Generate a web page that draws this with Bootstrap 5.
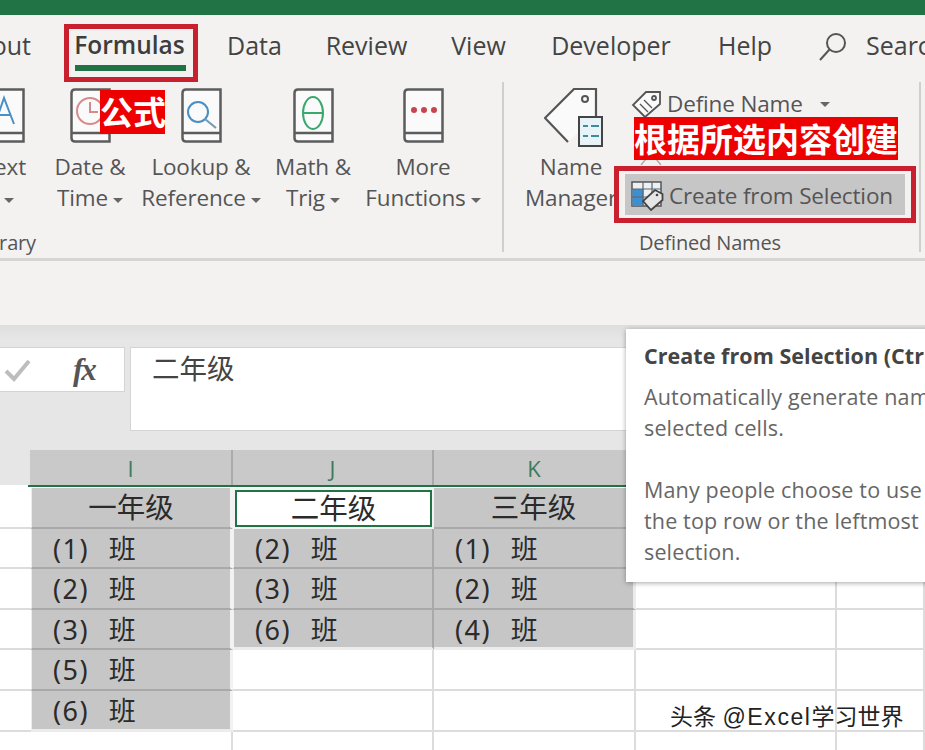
<!DOCTYPE html>
<html lang="zh">
<head>
<meta charset="utf-8">
<title>Excel</title>
<link href="https://cdn.jsdelivr.net/npm/bootstrap@5.3.0/dist/css/bootstrap.min.css" rel="stylesheet">
<style>
html,body{height:750px;overflow:hidden;background:#fff}
body{font-family:"Open Sans","Noto Sans CJK SC",sans-serif;color:#444;width:925px;position:relative}
.titlebar{height:15px;background:#217346}
.tabs{height:66px;background:#f3f2f1;font-size:25px;line-height:60px;white-space:nowrap;letter-spacing:0}
.tabs>div{flex:none;text-align:center}
.t0{width:53px;text-align:right!important;padding-right:22px;direction:rtl}
.t1{width:153px;font-weight:600;color:#3d3d3d;font-size:24.5px}.t2{width:97px}.t3{width:127px}.t4{width:97px}.t5{width:168px}.t6{width:100px}.t7{width:71px;padding-left:4px}.t8{width:70px;text-align:left!important}
.ribbon{height:177px;background:#f3f2f1;font-size:22.5px;color:#555;letter-spacing:-.15px;border:0}
.lib{width:502px;flex:none}
.items{height:147px;margin-left:-39px}
.item{flex:none;padding-top:7px;text-align:center;white-space:nowrap;line-height:31px}
.item svg{display:block;margin:0 auto 8px}
.w86{width:86px}.w136{width:136px}.w88{width:88px}.w132{width:132px}
.caret{display:inline-block;width:0;height:0;border:5px solid transparent;border-top:5px solid #666;border-bottom:0;margin-left:5px;vertical-align:3px}
.glabel{height:30px;line-height:30px;font-size:20px;color:#555;white-space:nowrap}
.sep{width:2px;height:170px;background:#d0cfce;margin-top:1px;flex:none}
.def{width:415px;flex:none}
.name-col{width:120px;margin-left:7px;padding-top:7px;text-align:center;line-height:31px;flex:none}
.name-col svg{display:block;margin:0 auto 3px;position:relative;left:3px}
.act{height:46px;white-space:nowrap}
.act span{line-height:26px}
.act svg{flex:none;margin-right:5px}
.act.hot{background:#c6c6c6;height:41px;margin:1px 0 0 -6px;width:280px;padding:3px 0 0 6px}
.ghost{margin-left:8px;margin-top:20px}
.rule{height:3px;background:#d6d5d4}
.strip{height:64px;background:#f3f2f1}
.fbar{height:125px;background:linear-gradient(#dedede,#e6e6e6 14px);padding-top:22px}
.fbox{height:45px;width:125px;background:#fff;border:1px solid #d4d4d4;border-left:0}
.fx{font-family:"Liberation Serif",serif;font-style:italic;font-weight:700;font-size:31px;line-height:40px;color:#555;margin-left:41px;letter-spacing:-2px}
.finput{height:84px;flex:1;margin-left:5px;background:#fff;border:1px solid #d4d4d4;border-right:0;padding-left:21px;font-size:27.500px;line-height:42px;color:#444}
.cols{height:35px;background:#e6e6e6;padding-left:30px}
.ch{background:#c9c9c9;border-right:2px solid #aaa;text-align:center;color:#3f7a5c;font-size:22px;line-height:36px}
.greenline{height:2px;margin-left:28px;background:#217346}
.cols .ch:nth-child(1){width:203px}
.cols .ch:nth-child(2){width:201px}
.cols .ch:nth-child(3){width:202px}
.sheet{display:grid;padding-top:1px;grid-template-columns:31px 202px 201px 202px 201px 1fr;grid-auto-rows:40.6px;background:#fff}
.sheet>div{border-right:2px solid #dcdcdc;border-bottom:2px solid #dcdcdc;white-space:nowrap;overflow:hidden}
.sheet>.a{border-right:0;border-left:0}
.sheet>.s{background:#c6c6c6;border-bottom-color:#a9a9a9;border-right-color:#a9a9a9;color:#2b2b2b;font-size:27px;line-height:40px;padding-left:21px;font-family:"Noto Sans","Noto Sans CJK SC",sans-serif;letter-spacing:1.5px;word-spacing:11px}
.sheet>.h{text-align:center;padding-left:0;letter-spacing:0;word-spacing:0;font-family:"Noto Sans CJK SC",sans-serif;font-size:28.500px;line-height:36px}
.sheet>.li{border-left:1px solid #ececec;border-right:3px solid #f2f2f2}
.sheet>.lj{border-left:1px solid #f2f2f2}
.sheet>.lk{border-right:3px solid #ececec}
.sheet>.e{border-bottom:3px solid #ececec}
.sheet>.on{background:#fff;box-shadow:inset 0 0 0 2px #217346;border:2px solid #f2f2f2;line-height:33px}
.anno{position:absolute;border:5px solid #c8202e}
.tag{position:absolute;background:#ee0000;color:#fff;font-weight:700;font-family:"Noto Sans CJK SC",sans-serif;font-size:33px;line-height:43px;text-align:center;white-space:nowrap}
.uline{position:absolute;left:75px;top:65px;width:111px;height:6px;background:#217346}
.tip{position:absolute;left:626px;top:329px;width:320px;height:253px;background:#fff;box-shadow:0 1px 5px rgba(0,0,0,.35);padding:11px 0 0 18px;font-size:21.5px;line-height:31px;color:#666;white-space:nowrap;letter-spacing:.15px}
.tip b{display:block;font-weight:700;color:#444;margin-bottom:10px;font-size:21.5px;letter-spacing:.05px}
.wm{position:absolute;left:670px;top:703px;font-size:23px;line-height:28px;color:#222;text-shadow:0 0 2px #fff,1px 1px 0 #fff;white-space:nowrap;font-family:"Liberation Sans","Noto Sans CJK SC",sans-serif}
.wm span{letter-spacing:1.6px}
</style>
</head>
<body>
<div class="titlebar"></div>
<div class="tabs d-flex">
  <div class="t0"><span dir="ltr">Layout</span></div>
  <div class="t1">Formulas</div><div class="t2">Data</div><div class="t3">Review</div><div class="t4">View</div><div class="t5">Developer</div><div class="t6">Help</div>
  <div class="t7 d-flex align-items-center justify-content-center pb-1"><svg width="28" height="29" viewBox="0 0 28 29" fill="none" stroke="#555" stroke-width="2"><circle cx="17" cy="11" r="9"/><path d="M10.500 17.500 1 28"/></svg></div>
  <div class="t8">Search</div>
</div>
<div class="ribbon d-flex">
  <div class="lib overflow-hidden">
    <div class="items d-flex">
      <div class="item w86"><svg width="41" height="55" viewBox="0 0 41 55" fill="#fafafa" stroke="#5c5c5c" stroke-width="2.500"><path d="M5 1.500H39.500V53.500H5Q1.500 53.500 1.500 50V5Q1.500 1.500 5 1.500ZM2 45H39.500"/><path d="M11 36 20 10 30 36M14 27H27" fill="none" stroke="#4a8fc4" stroke-width="2"/></svg>Text<br>&nbsp;<span class="caret"></span></div>
      <div class="item w86"><svg width="41" height="55" viewBox="0 0 41 55" fill="#fafafa" stroke="#5c5c5c" stroke-width="2.500"><path d="M5 1.500H39.500V53.500H5Q1.500 53.500 1.500 50V5Q1.500 1.500 5 1.500ZM2 45H39.500"/><circle cx="20" cy="23" r="13" fill="none" stroke="#d88a8a" stroke-width="2"/><path d="M20 14V24H28" fill="none" stroke="#d88a8a" stroke-width="2"/></svg>Date &amp;<br>Time<span class="caret"></span></div>
      <div class="item w136"><svg width="41" height="55" viewBox="0 0 41 55" fill="#fafafa" stroke="#5c5c5c" stroke-width="2.500"><path d="M5 1.500H39.500V53.500H5Q1.500 53.500 1.500 50V5Q1.500 1.500 5 1.500ZM2 45H39.500"/><circle cx="17" cy="24" r="10" fill="none" stroke="#4a8fc4" stroke-width="2"/><path d="M24 31 35 40" fill="none" stroke="#7a99ad" stroke-width="2.200"/></svg>Lookup &amp;<br>Reference<span class="caret"></span></div>
      <div class="item w88"><svg width="41" height="55" viewBox="0 0 41 55" fill="#fafafa" stroke="#5c5c5c" stroke-width="2.500"><path d="M5 1.500H39.500V53.500H5Q1.500 53.500 1.500 50V5Q1.500 1.500 5 1.500ZM2 45H39.500"/><ellipse cx="20" cy="25" rx="10" ry="16" fill="none" stroke="#3aa76d" stroke-width="2"/><path d="M10 25H30" fill="none" stroke="#3aa76d" stroke-width="2"/></svg>Math &amp;<br>Trig<span class="caret"></span></div>
      <div class="item w132"><svg width="41" height="55" viewBox="0 0 41 55" fill="#fafafa" stroke="#5c5c5c" stroke-width="2.500"><path d="M5 1.500H39.500V53.500H5Q1.500 53.500 1.500 50V5Q1.500 1.500 5 1.500ZM2 45H39.500"/><g fill="#c8454f" stroke="none"><circle cx="11" cy="22" r="3"/><circle cx="21" cy="22" r="3"/><circle cx="31" cy="22" r="3"/></g></svg>More<br>Functions<span class="caret"></span></div>
    </div>
    <div class="glabel d-flex justify-content-end" style="width:36px">Function Library</div>
  </div>
  <div class="sep"></div>
  <div class="def">
    <div class="d-flex" style="height:147px">
      <div class="name-col"><svg width="60" height="60" viewBox="0 0 60 60" fill="none"><path d="M52 28V1H30L1 30 24 54" fill="#fafafa" stroke="#555" stroke-width="2.200"/><circle cx="41" cy="11" r="3" stroke="#555" stroke-width="2"/><rect x="35" y="29" width="23" height="29" fill="#e8f3f8" stroke="#444" stroke-width="2"/><g stroke="#3f8a9c" stroke-width="2"><path d="M39 38h5M47 38h8M39 48h5M47 48h8"/></g></svg>Name<br>Manager</div>
      <div class="flex-grow-1">
        <div class="act d-flex align-items-center"><svg width="31" height="29" viewBox="0 0 31 29" fill="#fafafa" stroke="#555" stroke-width="1.800"><path d="M29 2 15 2 2 15 14 27 29 14Z"/><circle cx="23" cy="8" r="2"/><path d="M9 14 17 22M13 10 21 18" stroke-width="1.300"/></svg><span>Define Name</span><span class="caret" style="margin-left:17px"></span></div>
        <div class="act"><svg class="ghost" width="24" height="20" viewBox="0 0 24 20" fill="none" stroke="#b9a8a8" stroke-width="1.500"><path d="M2 18 12 6 22 18"/></svg></div>
        <div class="act hot d-flex align-items-center"><svg width="33" height="30" viewBox="0 0 33 30"><rect x="1" y="1" width="29" height="24" fill="#eef1f3" stroke="#555" stroke-width="1.500"/><rect x="1.500" y="8" width="11" height="17" fill="#3e8fd0"/><path d="M1 8H30M1 16H20M12 1V25M21 1V12" stroke="#5b6670" stroke-width="1.200"/><path d="M31.500 13 24 9 12 20 20 29 31.500 19Z" fill="#e6e6e6" stroke="#444" stroke-width="1.800"/><circle cx="26" cy="14" r="1.300" fill="#444"/></svg><span>Create from Selection</span></div>
      </div>
    </div>
    <div class="glabel" style="padding-left:135px">Defined Names</div>
  </div>
  <div class="sep"></div>
</div>
<div class="rule"></div>
<div class="strip"></div>
<div class="fbar d-flex">
  <div class="fbox d-flex align-items-center"><svg class="ms-1" width="28" height="24" viewBox="0 0 28 24" fill="none" stroke="#bdbdbd" stroke-width="4"><path d="M2 13 10 21 25 3"/></svg><span class="fx">fx</span></div>
  <div class="finput">二年级</div>
</div>
<div class="cols d-flex"><div class="ch">I</div><div class="ch">J</div><div class="ch">K</div></div>
<div class="greenline"></div>
<div class="sheet">
  <div class="a"></div><div class="s h li">一年级</div><div class="s h on">二年级</div><div class="s h lk">三年级</div><div></div><div></div>
  <div class="a"></div><div class="s li">(1) 班</div><div class="s lj">(2) 班</div><div class="s lk">(1) 班</div><div></div><div></div>
  <div class="a"></div><div class="s li">(2) 班</div><div class="s lj">(3) 班</div><div class="s lk">(2) 班</div><div></div><div></div>
  <div class="a"></div><div class="s li">(3) 班</div><div class="s lj e">(6) 班</div><div class="s lk e">(4) 班</div><div></div><div></div>
  <div class="a"></div><div class="s li">(5) 班</div><div></div><div></div><div></div><div></div>
  <div class="a"></div><div class="s li e">(6) 班</div><div></div><div></div><div></div><div></div>
  <div class="a"></div><div></div><div></div><div></div><div></div><div></div>
</div>

<div class="anno" style="left:64px;top:24px;width:134px;height:58px"></div>
<div class="uline"></div>
<div class="tag" style="left:100px;top:90px;width:65px;height:44px">公式</div>
<div class="tag" style="left:634px;top:117px;width:264px;height:43px">根据所选内容创建</div>
<div class="anno" style="left:614px;top:166px;width:302px;height:57px"></div>
<div class="tip"><b>Create from Selection (Ctrl+Shift+F3)</b>Automatically generate names from the<br>selected cells.<br><br>Many people choose to use the text in<br>the top row or the leftmost column of a<br>selection.</div>
<div class="wm">头条 <span>@Excel</span>学习世界</div>
</body>
</html>
